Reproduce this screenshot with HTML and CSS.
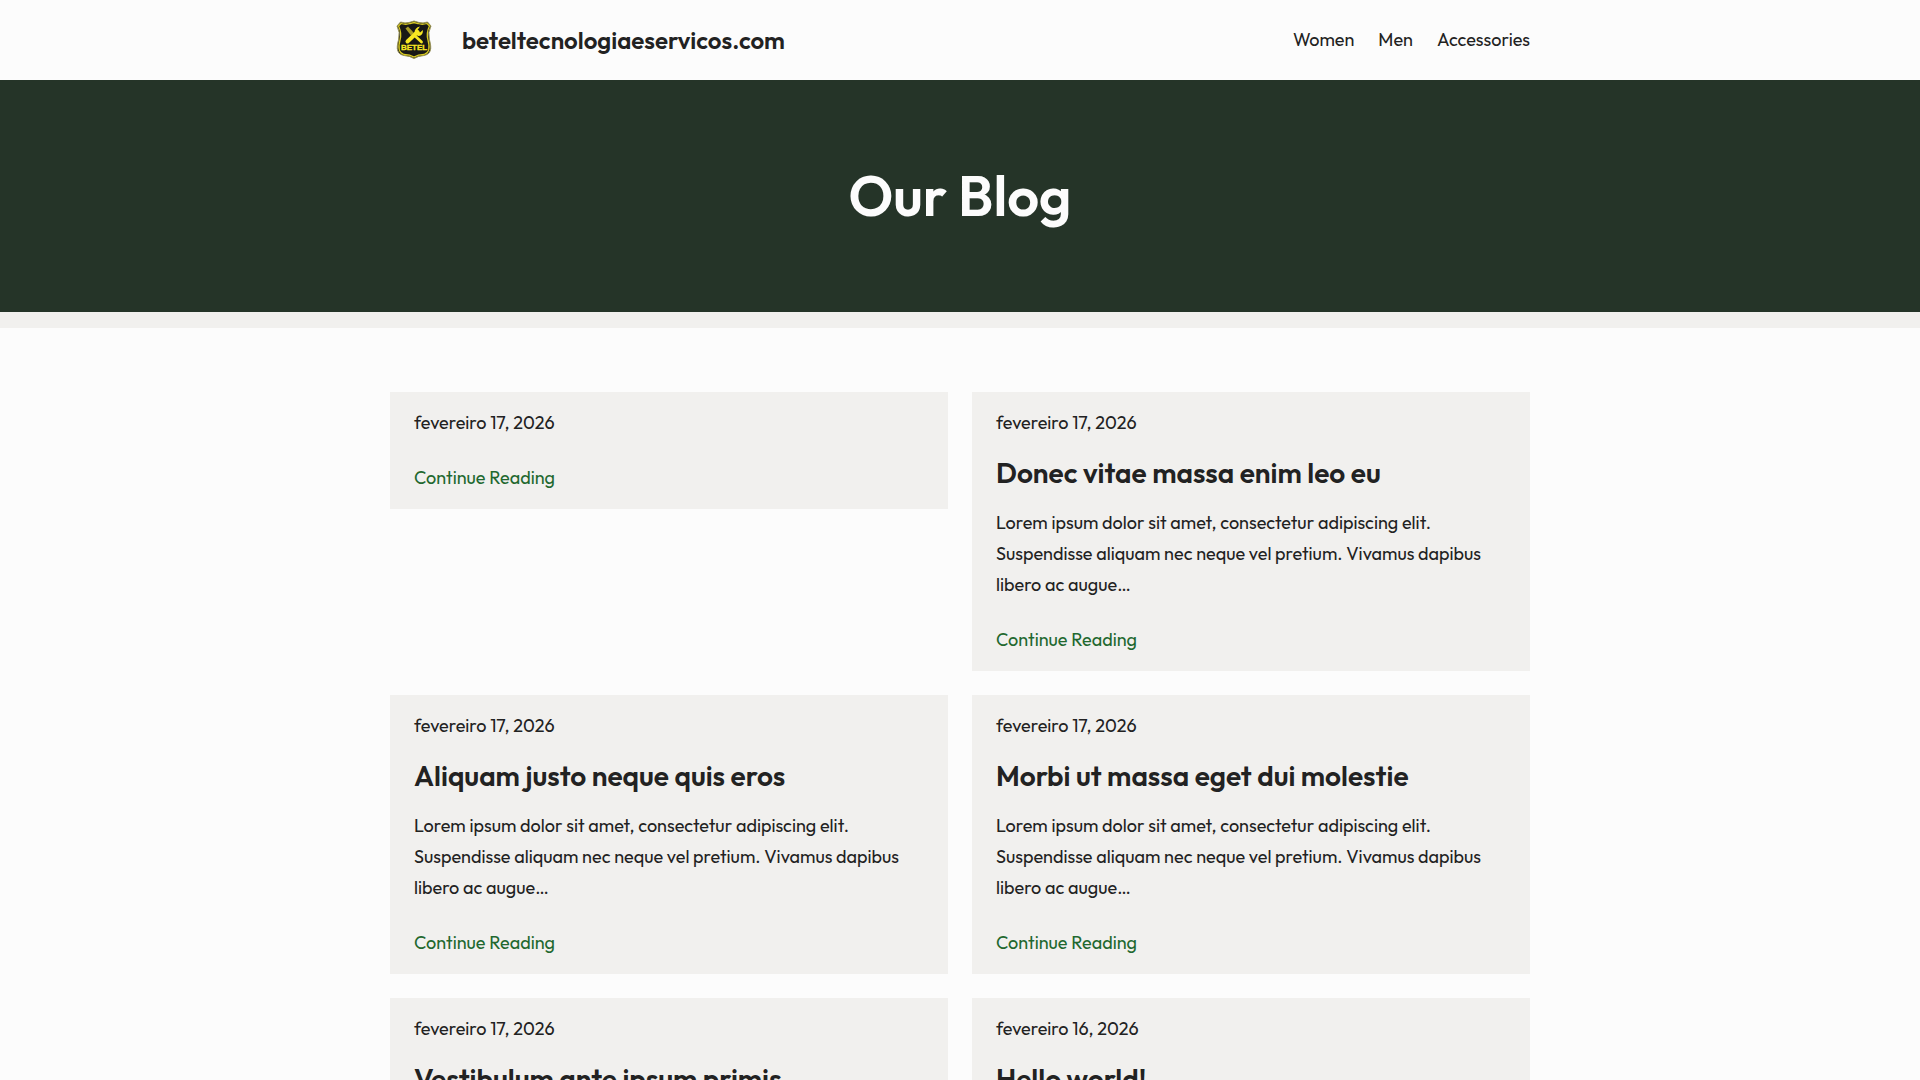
FILE: index.html
```html
<!DOCTYPE html>
<html lang="pt-BR">
<head>
    <meta charset="UTF-8">
    <meta name="viewport" content="width=device-width, initial-scale=1.0">
    <title>Our Blog</title>
    <link rel="stylesheet" href="styles.css">
</head>
<body>
    <header class="site-header">
        <div class="container header-inner">
            <a href="#" class="brand">
                <svg class="brand-logo" viewBox="0 0 48 48" aria-hidden="true">
                    <path d="M7 10 L10.500 6 Q15 7.500 19 6.500 L24 5 L29 6.500 Q33 7.500 37.500 6 L41 10 Q37.500 16 39.500 24 C42 33 41 38 34 39.500 Q28 40 24 42.500 Q20 40 14 39.500 C7 38 6 33 8.500 24 Q10.500 16 7 10 Z" fill="#1a1a18" stroke="#9b9558" stroke-width="1"/>
                    <path d="M8.500 10 L11 7.500 Q16 9 20 7.500 L24 6.500 L28 7.500 Q32 9 37 7.500 L39.500 10 Q36 17 38 24 C40.500 33 39 37 34 38.500 Q28 38.500 24 41 Q20 38.500 14 38.500 C9 37 7.500 33 10 24 Q12 17 8.500 10 Z" fill="#181816" stroke="#d8ca22" stroke-width="1.300"/>
                    <path d="M24 19 L31.500 26" stroke="#f7e722" stroke-width="2.800" stroke-linecap="round"/>
                    <path d="M15.500 12.500 L18 10.500 L24 17 L21 19.500 Z" fill="#a89d26"/>
                    <path d="M17.500 25.500 L27.500 16" stroke="#f7e722" stroke-width="4" stroke-linecap="round"/>
                    <path d="M30 10.500 Q24.500 11.500 24.500 17 L28 20 Q33 20 33 14 L30 16.500 L27.500 14 Z" fill="#f7e722"/>
                    <text class="brand-logo-text" x="24" y="34" text-anchor="middle">BETEL</text>
                </svg>
                <span class="brand-name">beteltecnologiaeservicos.com</span>
            </a>
            <nav class="main-nav">
                <a href="#">Women</a>
                <a href="#">Men</a>
                <a href="#">Accessories</a>
            </nav>
        </div>
    </header>

    <section class="hero">
        <h1>Our Blog</h1>
    </section>

    <main class="container">
        <div class="post-grid">
            <article class="post-card">
                <time class="post-date" datetime="2026-02-17">fevereiro 17, 2026</time>
                <a href="#" class="read-more">Continue Reading</a>
            </article>

            <article class="post-card">
                <time class="post-date" datetime="2026-02-17">fevereiro 17, 2026</time>
                <h2><a href="#">Donec vitae massa enim leo eu</a></h2>
                <p>Lorem ipsum dolor sit amet, consectetur adipiscing elit. Suspendisse aliquam nec neque vel pretium. Vivamus dapibus libero ac augue…</p>
                <a href="#" class="read-more">Continue Reading</a>
            </article>

            <article class="post-card">
                <time class="post-date" datetime="2026-02-17">fevereiro 17, 2026</time>
                <h2><a href="#">Aliquam justo neque quis eros</a></h2>
                <p>Lorem ipsum dolor sit amet, consectetur adipiscing elit. Suspendisse aliquam nec neque vel pretium. Vivamus dapibus libero ac augue…</p>
                <a href="#" class="read-more">Continue Reading</a>
            </article>

            <article class="post-card">
                <time class="post-date" datetime="2026-02-17">fevereiro 17, 2026</time>
                <h2><a href="#">Morbi ut massa eget dui molestie</a></h2>
                <p>Lorem ipsum dolor sit amet, consectetur adipiscing elit. Suspendisse aliquam nec neque vel pretium. Vivamus dapibus libero ac augue…</p>
                <a href="#" class="read-more">Continue Reading</a>
            </article>

            <article class="post-card">
                <time class="post-date" datetime="2026-02-17">fevereiro 17, 2026</time>
                <h2><a href="#">Vestibulum ante ipsum primis</a></h2>
            </article>

            <article class="post-card">
                <time class="post-date" datetime="2026-02-16">fevereiro 16, 2026</time>
                <h2><a href="#">Hello world!</a></h2>
            </article>
        </div>
    </main>
</body>
</html>
```
FILE: styles.css
```css
* {
    box-sizing: border-box;
}
body {
    margin: 0;
    background-color: #fcfcfc;
    color: #222222;
    font-family: Outfit, Lato, sans-serif;
    font-size: 18px;
    line-height: 31px;
}
a {
    color: inherit;
    text-decoration: none;
}
.container {
    max-width: 1188px;
    margin: 0 auto;
    padding: 0 24px;
}
.header-inner {
    display: flex;
    align-items: center;
    justify-content: space-between;
    min-height: 80px;
}
.brand {
    display: flex;
    align-items: center;
    gap: 24px;
}
.brand-logo {
    width: 48px;
    height: 48px;
}
.brand-logo-text {
    fill: #f7e722;
    stroke: #f7e722;
    stroke-width: 0.3px;
    font-family: "Liberation Sans", sans-serif;
    font-size: 8px;
    font-weight: bold;
}
.brand-name {
    font-size: 24px;
    font-weight: 600;
}
.main-nav {
    display: flex;
    gap: 24px;
    line-height: 30px;
}
.hero {
    padding: 80px 24px;
    background-color: #253428;
    border-bottom: 16px solid #f1f0ee;
    color: #fcfcfc;
    text-align: center;
}
.hero h1 {
    margin: 0;
    font-size: 56px;
    font-weight: 600;
    line-height: 72px;
}
.post-grid {
    display: grid;
    grid-template-columns: 1fr 1fr;
    align-items: start;
    gap: 24px;
    padding: 64px 0;
}
.post-card {
    padding: 15px 24px 16px;
    background-color: #f1f0ee;
}
.post-date {
    display: block;
}
.post-card h2 {
    margin: 17px 0 16px;
    font-size: 28px;
    font-weight: 600;
    line-height: 36px;
}
.post-card p {
    margin: 0;
}
.read-more {
    display: block;
    margin-top: 24px;
    color: #22682f;
}
```
